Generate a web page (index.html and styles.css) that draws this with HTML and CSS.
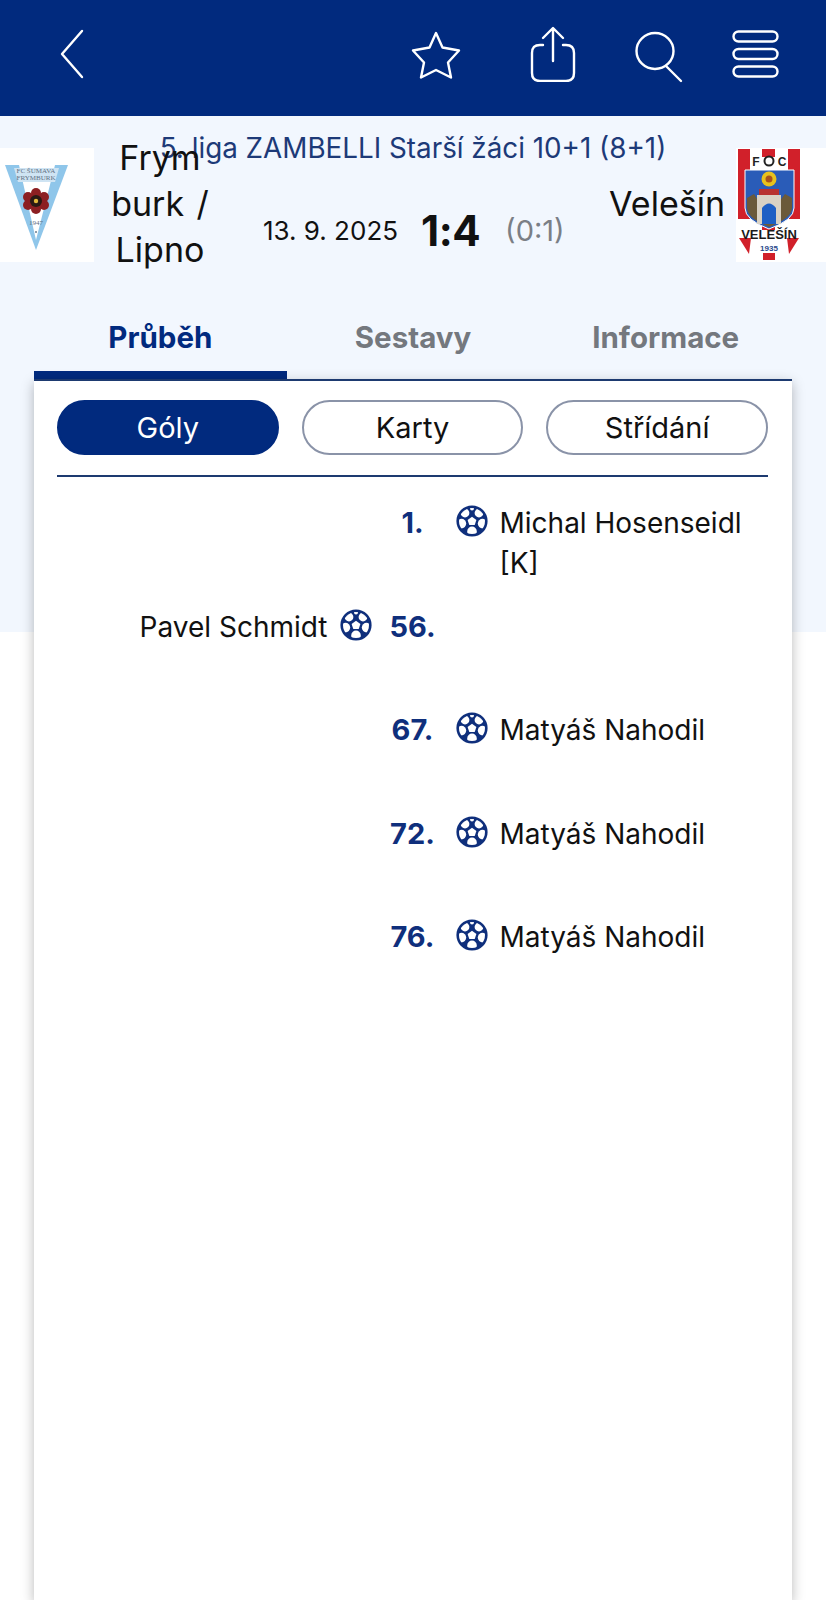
FILE: index.html
```html
<!DOCTYPE html>
<html lang="cs">
<head>
<meta charset="utf-8">
<title>Zápas</title>
<link rel="stylesheet" href="styles.css">
</head>
<body>
<div class="page">
  <header class="topbar">
    <svg class="ic-back" viewBox="0 0 24 50"><path d="M22 2 L2 25 L22 48"/></svg>
    <div class="actions">
      <svg class="ic-star" viewBox="0 0 52 50"><path d="M26 3 L32.5 17.5 L49 20.5 L38 32.5 L41 47.5 L26 40 L11 47.5 L14 32.5 L3 20.5 L19.5 17.5 Z"/></svg>
      <svg class="ic-share" viewBox="0 0 46 56"><path d="M13 19 H10 Q2 19 2 27 V47 Q2 55 10 55 H36 Q44 55 44 47 V27 Q44 19 36 19 H33"/><path d="M23 35 V3 M13 12 L23 2 L33 12"/></svg>
      <svg class="ic-search" viewBox="0 0 50 56"><ellipse cx="21" cy="22" rx="18.5" ry="18"/><path d="M32 37 L47 52"/></svg>
      <svg class="ic-menu" viewBox="0 0 47 48"><rect x="1.5" y="1.5" width="44" height="10" rx="5"/><rect x="1.5" y="19" width="44" height="10" rx="5"/><rect x="1.5" y="36.5" width="44" height="10" rx="5"/></svg>
    </div>
  </header>

  <div class="league">5. liga ZAMBELLI Starší žáci 10+1 (8+1)</div>

  <section class="match">
    <svg class="logo" viewBox="0 0 94 114">
      <rect width="94" height="114" fill="#fff"/>
      <path d="M5 17 H68 L36 102 Z" fill="#8fc6ea"/>
      <path d="M19 17 H55 L36 92 Z" fill="#fff"/>
      <path d="M14 20 H59 L55 34 H18 Z" fill="#cfe4f3"/>
      <text class="pennant-text" x="36" y="25">FC ŠUMAVA</text>
      <text class="pennant-text" x="36" y="32">FRYMBURK</text>
      <g fill="#8c1f22">
        <circle cx="36" cy="45" r="5"/><circle cx="36" cy="61" r="5"/><circle cx="28" cy="49" r="5"/><circle cx="44" cy="49" r="5"/><circle cx="28" cy="57" r="5"/><circle cx="44" cy="57" r="5"/>
      </g>
      <circle cx="36" cy="53" r="6" fill="#2a1a14"/>
      <circle cx="36" cy="53" r="2.2" fill="#e3b83a"/>
      <text class="pennant-text" x="36" y="77">1947</text>
      <circle cx="36" cy="84" r="1" fill="#6a7d8c"/>
    </svg>
    <div class="team team-home">Frym<wbr>burk / Lipno</div>
    <div class="result">
      <span class="date">13. 9. 2025</span>
      <span class="score">1:4</span>
      <span class="half">(0:1)</span>
    </div>
    <div class="team team-away">Velešín</div>
    <svg class="logo logo-away" viewBox="0 0 90 114">
      <rect width="90" height="114" fill="#fff"/>
      <g fill="#d1202a">
        <rect x="2" y="1" width="12" height="70"/><rect x="26" y="1" width="13" height="8"/><rect x="52" y="1" width="12" height="70"/>
        <rect x="26" y="70" width="13" height="12"/>
        <path d="M3 90 H15 L13 106 Z"/><path d="M51 90 H63 L53 106 Z"/><rect x="27" y="105" width="12" height="7"/>
      </g>
      <text class="fc" x="20" y="18">F</text>
      <text class="fc" x="46" y="18">C</text>
      <circle cx="33" cy="13" r="4.5" fill="#fff" stroke="#222" stroke-width="2"/>
      <path d="M9 22 H58 V60 Q58 72 33 81 Q9 72 9 60 Z" fill="#2a5cb8" stroke="#fff" stroke-width="1"/>
      <path d="M11 50 L18 46 L23 54 H43 L49 46 L56 50 V60 Q56 70 33 79 Q11 70 11 60 Z" fill="#6b5a3a"/>
      <circle cx="33" cy="31" r="7.5" fill="#e8c21e"/>
      <circle cx="33" cy="31" r="3.5" fill="#a8531c"/>
      <rect x="23" y="41" width="20" height="6" fill="#b8322f"/>
      <rect x="21" y="47" width="24" height="29" fill="#d9d2c4"/>
      <path d="M26 76 V60 Q33 51 40 60 V76 Z" fill="#1e5fc4"/>
      <text class="vel" x="33" y="91">VELEŠÍN</text>
      <text class="est" x="33" y="103">1935</text>
    </svg>
  </section>

  <nav class="tabs">
    <div class="tab tab-active">Průběh</div>
    <div class="tab">Sestavy</div>
    <div class="tab">Informace</div>
  </nav>

  <main class="card">
    <div class="pills">
      <div class="pill pill-active">Góly</div>
      <div class="pill">Karty</div>
      <div class="pill">Střídání</div>
    </div>
    <div class="events">
      <div class="event">
        <div class="side side-home"></div>
        <div class="minute">1.</div>
        <div class="side side-away">
          <svg class="ball" viewBox="0 0 32 32"><use href="#ball"/></svg>
          <span>Michal Hosenseidl [K]</span>
        </div>
      </div>
      <div class="event">
        <div class="side side-home">
          <span>Pavel Schmidt</span>
          <svg class="ball" viewBox="0 0 32 32"><use href="#ball"/></svg>
        </div>
        <div class="minute">56.</div>
        <div class="side side-away"></div>
      </div>
      <div class="event">
        <div class="side side-home"></div>
        <div class="minute">67.</div>
        <div class="side side-away">
          <svg class="ball" viewBox="0 0 32 32"><use href="#ball"/></svg>
          <span>Matyáš Nahodil</span>
        </div>
      </div>
      <div class="event">
        <div class="side side-home"></div>
        <div class="minute">72.</div>
        <div class="side side-away">
          <svg class="ball" viewBox="0 0 32 32"><use href="#ball"/></svg>
          <span>Matyáš Nahodil</span>
        </div>
      </div>
      <div class="event">
        <div class="side side-home"></div>
        <div class="minute">76.</div>
        <div class="side side-away">
          <svg class="ball" viewBox="0 0 32 32"><use href="#ball"/></svg>
          <span>Matyáš Nahodil</span>
        </div>
      </div>
    </div>
  </main>
</div>

<svg class="defs" aria-hidden="true">
  <clipPath id="ball-clip"><circle cx="16" cy="16" r="13"/></clipPath>
  <symbol id="ball" viewBox="0 0 32 32">
    <circle cx="16" cy="16" r="15.6" fill="#0f2f7c"/>
    <g fill="#fff" clip-path="url(#ball-clip)">
      <path d="M16 11.8 L20.4 15 L18.7 20 H13.3 L11.6 15 Z"/>
      <circle cx="16" cy="3.4" r="2"/>
      <circle cx="9" cy="8" r="4.4"/>
      <circle cx="23" cy="8" r="4.4"/>
      <circle cx="5.4" cy="18.6" r="4.8"/>
      <circle cx="26.6" cy="18.6" r="4.8"/>
      <circle cx="16" cy="26.4" r="4.8"/>
    </g>
  </symbol>
</svg>
</body>
</html>
```

FILE: styles.css
```css
* { box-sizing: border-box; }
html, body { margin: 0; padding: 0; }
body {
  font-family: "Inter", "Liberation Sans", sans-serif;
  color: #111;
  overflow: hidden;
  background: linear-gradient(#f2f7fe 632px, #fff 632px);
}
.page { height: 1600px; display: flex; flex-direction: column; }

.topbar {
  height: 116px;
  flex: none;
  background: #012a7e;
  display: flex;
  align-items: flex-start;
  padding-left: 60px;
}
.topbar svg { fill: none; stroke: #fff; stroke-width: 2.4; stroke-linecap: round; stroke-linejoin: round; flex: none; }
.ic-back { width: 24px; height: 50px; margin-top: 29px; }
.actions { margin-left: auto; display: flex; align-items: flex-start; }
.ic-star { width: 52px; height: 50px; margin-top: 30px; margin-right: 68px; }
.ic-share { width: 46px; height: 56px; margin-top: 26px; margin-right: 58px; }
.ic-search { width: 50px; height: 56px; margin-top: 29px; margin-right: 48px; }
.ic-menu { width: 47px; height: 48px; margin-top: 30px; margin-right: 47px; }

.league {
  margin-top: 15px;
  height: 34px;
  line-height: 34px;
  text-align: center;
  font-size: 27.8px;
  color: #1d3a78;
  flex: none;
}

.match {
  margin-top: -29px;
  height: 138px;
  flex: none;
  display: flex;
  align-items: center;
}
.logo { width: 94px; height: 114px; flex: none; }
.logo-away { width: 90px; }
.pennant-text { font-family: "Liberation Serif", serif; font-size: 7px; fill: #5f7183; text-anchor: middle; }
.fc { font-family: "Liberation Sans", sans-serif; font-weight: 700; font-size: 12px; fill: #222; text-anchor: middle; }
.vel { font-family: "Liberation Sans", sans-serif; font-weight: 700; font-size: 13px; fill: #1b1b1b; text-anchor: middle; }
.est { font-family: "Liberation Sans", sans-serif; font-weight: 700; font-size: 8px; fill: #2a4a8c; text-anchor: middle; }

.team { font-size: 34px; line-height: 46px; text-align: center; flex: none; padding-bottom: 2px; }
.team-home { width: 112px; margin-left: 10px; word-spacing: 3px; }
.team-away { margin-right: 11px; }
.result { flex: 1; display: flex; align-items: center; margin-top: 50px; padding-left: 47px; }
.date { font-size: 26px; }
.score { font-size: 42px; font-weight: 700; margin-left: 23px; letter-spacing: -0.5px; }
.half { font-size: 29px; color: #7b7f86; margin-left: 25px; }

.tabs { margin: 34px 34px 0; height: 71px; display: flex; flex: none; }
.tab {
  flex: 1;
  font-size: 29.5px;
  font-weight: 700;
  text-align: center;
  color: #74787e;
  padding-top: 11px;
  line-height: 36px;
}
.tab-active { color: #012a7e; border-bottom: 8px solid #012a7e; }

.card {
  margin: 0 34px;
  flex: 1;
  background: #fff;
  border-top: 2px solid #1d3a70;
  box-shadow: 0 4px 12px rgba(0, 0, 0, 0.28);
  padding: 19px 24px 0 23px;
}
.pills {
  display: flex;
  gap: 23px;
  padding-bottom: 20px;
  border-bottom: 2px solid #1d3a70;
}
.pill {
  flex: 1;
  height: 55px;
  line-height: 51px;
  border: 2px solid #8a93a8;
  border-radius: 28px;
  text-align: center;
  font-size: 29px;
}
.pill-active { background: #012a7e; border-color: #012a7e; color: #fff; }

.events { padding-top: 26px; display: flex; flex-direction: column; gap: 23.6px; }
.event {
  display: grid;
  grid-template-columns: 1fr 82px 1fr;
  min-height: 80px;
  font-size: 28px;
  line-height: 40px;
}
.minute { font-weight: 700; font-size: 29px; color: #0f2f7c; text-align: center; }
.side { display: flex; align-items: flex-start; gap: 12px; }
.side-home { justify-content: flex-end; }
.side-away { padding-left: 2px; }
.ball { width: 32px; height: 32px; flex: none; margin-top: 2px; }
.defs { width: 0; height: 0; position: absolute; }
```
